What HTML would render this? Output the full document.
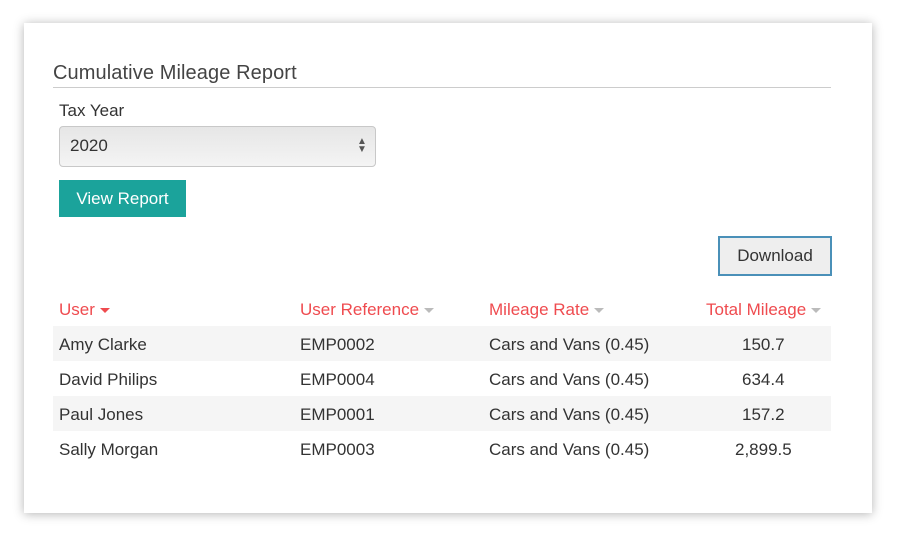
<!DOCTYPE html>
<html><head><style>
body{margin:0;width:900px;height:541px;background:#fff;font-family:"Liberation Sans",sans-serif;position:relative;overflow:hidden;color:#333}
.card{position:absolute;left:24px;top:23px;width:848px;height:490px;background:#fff;box-shadow:0 1px 10px rgba(0,0,0,.3)}
.a{position:absolute;white-space:nowrap}
.row{position:absolute;left:53px;width:778px;height:35px}
.row span{position:absolute;top:9px;font-size:17px;color:#333}
.h{color:#ef4b4f;font-size:17px}
.tri{display:inline-block;width:0;height:0;border-left:5px solid transparent;border-right:5px solid transparent;border-top:5px solid #bbb;vertical-align:middle;margin-left:5px}
</style></head><body>
<div class="card"></div>
<div class="a" style="left:53px;top:62px;font-size:20px;letter-spacing:0.1px;color:#444">Cumulative Mileage Report</div>
<div class="a" style="left:53px;top:87px;width:778px;height:1px;background:#ccc"></div>
<div class="a" style="left:59px;top:101px;font-size:17px">Tax Year</div>
<div class="a" style="left:59px;top:126px;width:315px;height:39px;border:1px solid #c8c8c8;border-radius:4px;background:linear-gradient(#e6e6e6,#f4f4f4)"></div>
<div class="a" style="left:70px;top:136px;font-size:17px">2020</div>
<div class="a" style="left:357px;top:138px;font-size:10px;line-height:8px;color:#555">▲<br>▼</div>
<div class="a" style="left:59px;top:180px;width:127px;height:37px;background:#1ba39b;color:#fff;font-size:17px;text-align:center;line-height:37px">View Report</div>
<div class="a" style="left:718px;top:236px;width:110px;height:36px;border:2px solid #4a90b8;background:#eee;font-size:17px;text-align:center;line-height:36px">Download</div>
<div class="a h" style="left:59px;top:300px">User<span class="tri" style="border-top-color:#ef4b4f"></span></div>
<div class="a h" style="left:300px;top:300px">User Reference<span class="tri"></span></div>
<div class="a h" style="left:489px;top:300px">Mileage Rate<span class="tri"></span></div>
<div class="a h" style="left:706px;top:300px">Total Mileage<span class="tri"></span></div>
<div class="row" style="top:326px;background:#f5f5f5"><span style="left:6px">Amy Clarke</span><span style="left:247px">EMP0002</span><span style="left:436px">Cars and Vans (0.45)</span><span style="left:689px">150.7</span></div>
<div class="row" style="top:361px"><span style="left:6px">David Philips</span><span style="left:247px">EMP0004</span><span style="left:436px">Cars and Vans (0.45)</span><span style="left:689px">634.4</span></div>
<div class="row" style="top:396px;background:#f5f5f5"><span style="left:6px">Paul Jones</span><span style="left:247px">EMP0001</span><span style="left:436px">Cars and Vans (0.45)</span><span style="left:689px">157.2</span></div>
<div class="row" style="top:431px"><span style="left:6px">Sally Morgan</span><span style="left:247px">EMP0003</span><span style="left:436px">Cars and Vans (0.45)</span><span style="left:682px">2,899.5</span></div>
</body></html>
